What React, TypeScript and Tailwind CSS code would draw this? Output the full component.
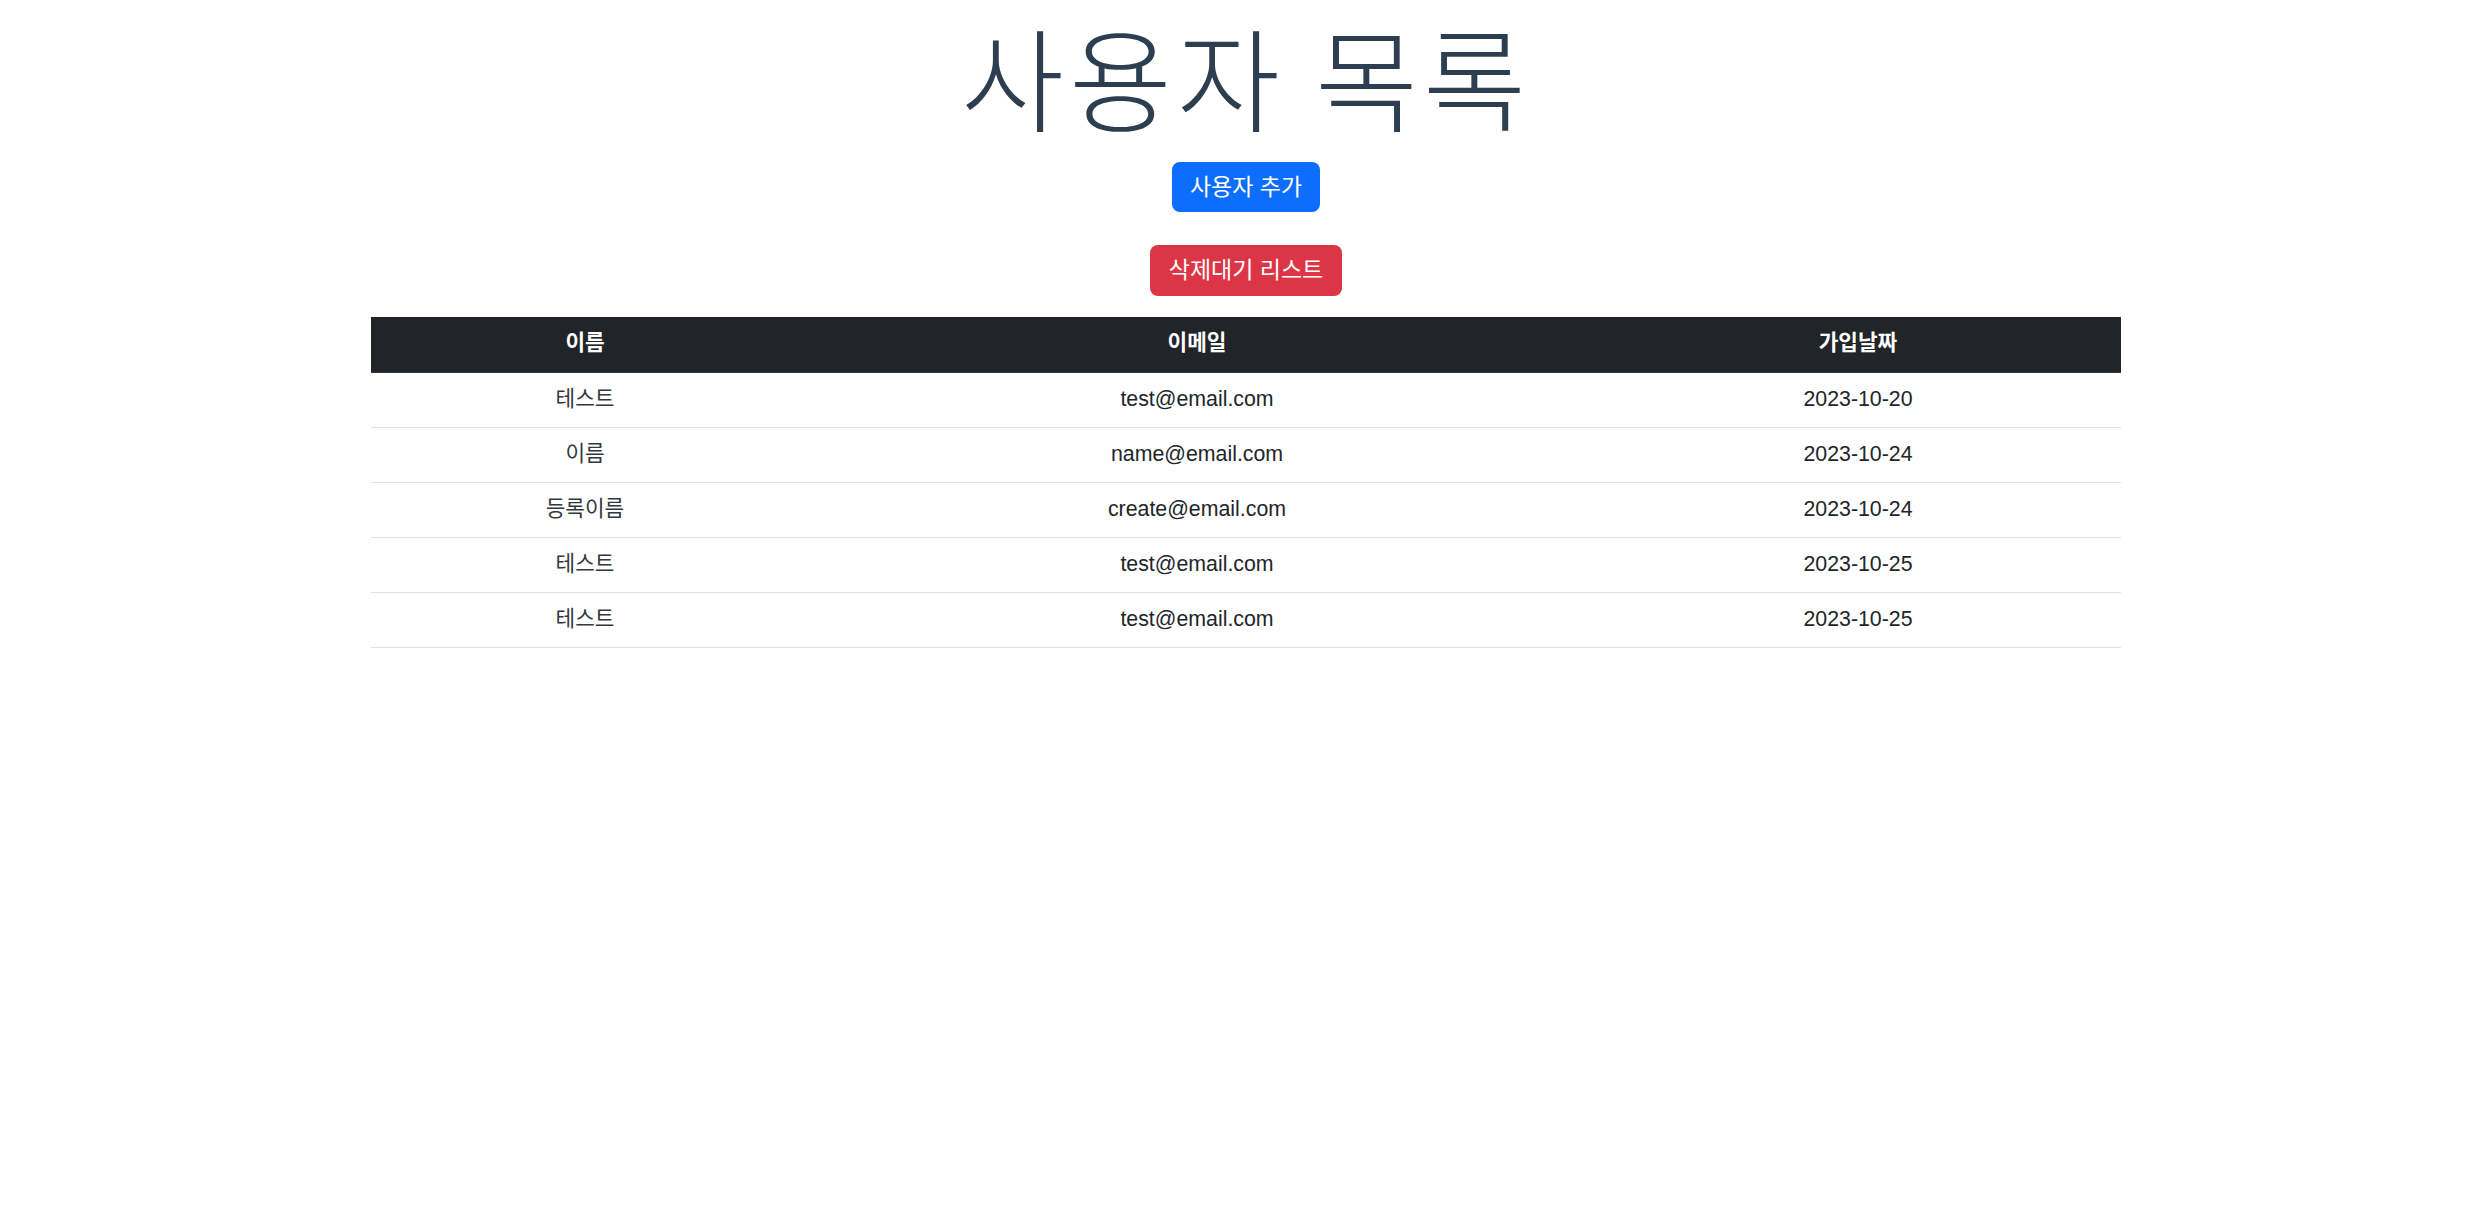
import React from "react";

const rows = [
  { name: "테스트", email: "test@email.com", date: "2023-10-20" },
  { name: "이름", email: "name@email.com", date: "2023-10-24" },
  { name: "등록이름", email: "create@email.com", date: "2023-10-24" },
  { name: "테스트", email: "test@email.com", date: "2023-10-25" },
  { name: "테스트", email: "test@email.com", date: "2023-10-25" },
];

export default function App() {
  return (
    <div
      className="min-h-screen bg-white text-center text-[#212529]"
      style={{ fontFamily: '"Liberation Sans", Arial, "Noto Sans CJK KR", sans-serif' }}
    >
      <h1
        className="m-0 text-[112px] font-light leading-[150px] tracking-[5px] text-[#2c3e50]"
        style={{ fontFamily: '"Noto Sans CJK KR", sans-serif' }}
      >
        사용자 목록
      </h1>
      <div className="mt-[12px] flex justify-center">
        <button className="flex h-[50px] w-[148px] items-center justify-center rounded-[8px] bg-[#0d6efd] text-[23px] text-white">
          사용자 추가
        </button>
      </div>
      <div className="mt-[33px] flex justify-center">
        <button className="flex h-[51px] w-[192px] items-center justify-center rounded-[8px] bg-[#dc3545] text-[23px] text-white">
          삭제대기 리스트
        </button>
      </div>
      <div className="mx-auto mt-[21px] w-[1750px]">
        <table className="w-full border-collapse text-[21.33px]">
          <thead>
            <tr className="h-[55px] bg-[#212529] text-white">
              <th className="w-[428px] border-b border-[#373b3e] font-bold">이름</th>
              <th className="w-[796px] border-b border-[#373b3e] font-bold">이메일</th>
              <th className="border-b border-[#373b3e] font-bold">가입날짜</th>
            </tr>
          </thead>
          <tbody>
            {rows.map((r, i) => (
              <tr key={i} className="h-[55px] border-b border-[#dee2e6]">
                <td className="text-[#33383d]">{r.name}</td>
                <td>{r.email}</td>
                <td>{r.date}</td>
              </tr>
            ))}
          </tbody>
        </table>
      </div>
    </div>
  );
}
